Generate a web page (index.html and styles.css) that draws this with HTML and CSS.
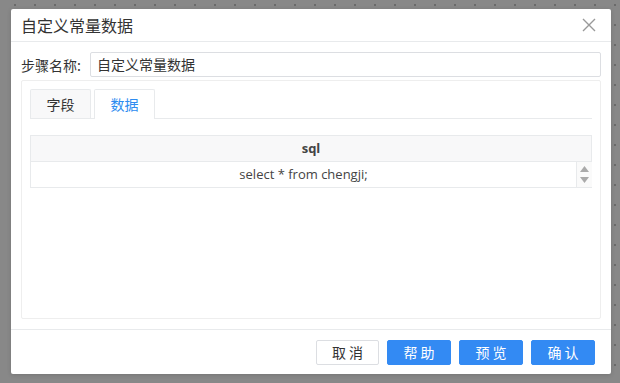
FILE: index.html
```html
<!DOCTYPE html>
<html lang="zh">
<head>
<meta charset="utf-8">
<link rel="stylesheet" href="styles.css">
</head>
<body>
<div class="dialog">
  <div class="header">
    <span class="title">自定义常量数据</span>
    <svg class="close" width="14" height="14" viewBox="0 0 14 14"><path d="M1 1L13 13M13 1L1 13" stroke="#999" stroke-width="1.4" fill="none"/></svg>
  </div>
  <div class="body">
    <div class="form-row">
      <label class="label">步骤名称:</label>
      <div class="input">自定义常量数据</div>
    </div>
    <div class="panel">
      <div class="tabs">
        <div class="tab">字段</div>
        <div class="tab active">数据</div>
      </div>
      <div class="table">
        <div class="thead">sql</div>
        <div class="trow">
          <div class="cell">select * from chengji;</div>
          <div class="spin">
            <svg width="9" height="6" viewBox="0 0 9 6"><path d="M0 6L4.5 0L9 6Z" fill="#aaa"/></svg>
            <svg width="9" height="6" viewBox="0 0 9 6"><path d="M0 0L4.5 6L9 0Z" fill="#aaa"/></svg>
          </div>
        </div>
      </div>
    </div>
  </div>
  <div class="footer">
    <button class="btn cancel">取消</button>
    <button class="btn primary">帮助</button>
    <button class="btn primary">预览</button>
    <button class="btn primary">确认</button>
  </div>
</div>
</body>
</html>
```
FILE: styles.css
```css
html, body { margin: 0; padding: 0; }
body {
  width: 620px;
  height: 383px;
  overflow: hidden;
  background-color: #888888;
  background-image: radial-gradient(circle, #6a6a6a 0.8px, transparent 1.2px);
  background-size: 20px 20px;
  background-position: 5px -5px;
  padding: 9px 0 0 11px;
  box-sizing: border-box;
  font-family: "Noto Sans CJK SC", "Noto Sans", sans-serif;
  color: #333;
}
.dialog {
  width: 600px;
  height: 365px;
  background: #fff;
  border-radius: 2px;
  display: flex;
  flex-direction: column;
  box-shadow: 0 1px 4px rgba(0,0,0,0.15);
}
.header {
  height: 33px;
  box-sizing: border-box;
  border-bottom: 1px solid #e8eaec;
  display: flex;
  align-items: center;
  justify-content: space-between;
  padding: 0 15px 0 10px;
}
.title { font-size: 16px; color: #333; line-height: 1; }
.close { display: block; }
.body {
  flex: 1;
  padding: 10px 10px 10px 10px;
  display: flex;
  flex-direction: column;
  gap: 3px;
}
.form-row { display: flex; align-items: center; height: 25px; }
.label { width: 69px; font-size: 14px; color: #333; line-height: 1; }
.input {
  flex: 1;
  height: 25px;
  box-sizing: border-box;
  border: 1px solid #dcdee2;
  border-radius: 2px;
  font-size: 14px;
  line-height: 23px;
  padding-left: 6px;
  color: #333;
}
.panel {
  flex: 1;
  border: 1px solid #eeeeee;
  border-radius: 2px;
  padding: 8px 8px 0 8px;
}
.tabs {
  display: flex;
  gap: 3px;
  border-bottom: 1px solid #e8eaec;
  height: 30px;
  box-sizing: border-box;
}
.tab {
  width: 61px;
  height: 29px;
  box-sizing: border-box;
  border: 1px solid #e8eaec;
  border-bottom: none;
  border-radius: 2px 2px 0 0;
  background: #f8f8f9;
  font-size: 14px;
  color: #333;
  text-align: center;
  line-height: 28px;
}
.tab.active {
  background: #fff;
  color: #2d8cf0;
  height: 30px;
}
.table {
  margin-top: 16px;
  border: 1px solid #e8eaec;
  border-right: none;
}
.thead {
  height: 25px;
  background: #f8f8f9;
  border-bottom: 1px solid #e8eaec;
  border-right: 1px solid #e8eaec;
  text-align: center;
  font-size: 13px;
  font-weight: bold;
  line-height: 25px;
  color: #444;
  font-family: "Open Sans", "Noto Sans", sans-serif;
}
.trow { display: flex; height: 25px; }
.cell {
  flex: 1;
  text-align: center;
  font-size: 13px;
  line-height: 25px;
  color: #444;
  border-right: 1px solid #e8eaec;
  font-family: "Open Sans", "Noto Sans", sans-serif;
}
.spin {
  width: 15px;
  background: #fafafa;
  display: flex;
  flex-direction: column;
  align-items: center;
  justify-content: center;
  gap: 5px;
}
.spin svg { display: block; }
.footer {
  height: 45px;
  box-sizing: border-box;
  border-top: 1px solid #e8eaec;
  display: flex;
  justify-content: flex-end;
  align-items: flex-start;
  padding: 10px 16px 0 0;
  gap: 8px;
}
.btn {
  width: 64px;
  height: 25px;
  box-sizing: border-box;
  border: 1px solid #dcdee2;
  border-radius: 2px;
  background: #fff;
  color: #333;
  font-family: "Noto Sans CJK SC", sans-serif;
  font-size: 14px;
  letter-spacing: 3px;
  text-indent: 3px;
  padding: 0;
  line-height: 23px;
}
.btn.cancel { width: 63px; }
.btn.primary {
  background: #338af3;
  border-color: #338af3;
  color: #fff;
}
```
